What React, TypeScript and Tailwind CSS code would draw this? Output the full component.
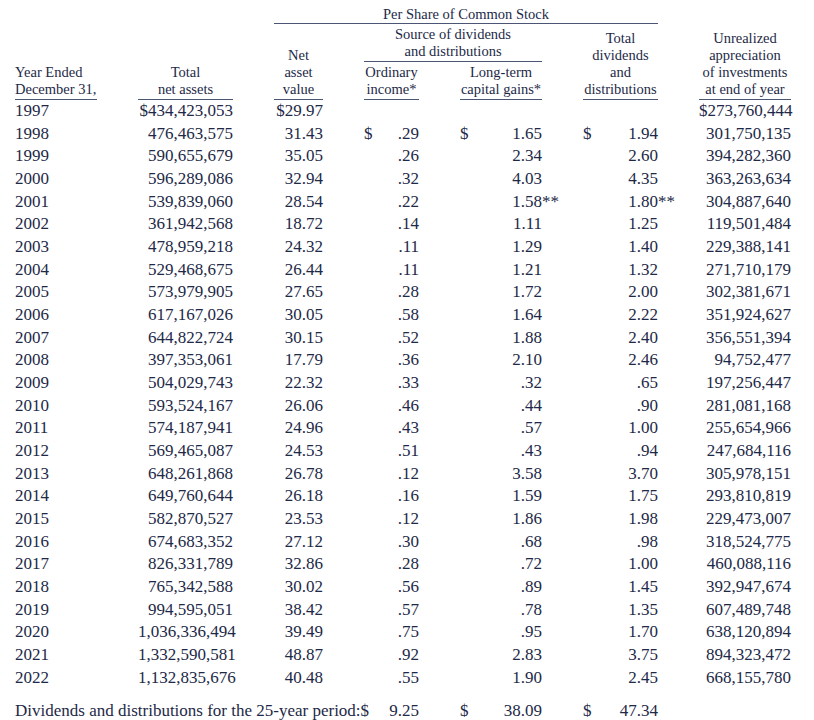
const rows: string[][] = [
  ["1997", "$434,423,053", "$29.97", "", "", "", "$273,760,444"],
  ["1998", "476,463,575", "31.43", ".29", "1.65", "1.94", "301,750,135"],
  ["1999", "590,655,679", "35.05", ".26", "2.34", "2.60", "394,282,360"],
  ["2000", "596,289,086", "32.94", ".32", "4.03", "4.35", "363,263,634"],
  ["2001", "539,839,060", "28.54", ".22", "1.58**", "1.80**", "304,887,640"],
  ["2002", "361,942,568", "18.72", ".14", "1.11", "1.25", "119,501,484"],
  ["2003", "478,959,218", "24.32", ".11", "1.29", "1.40", "229,388,141"],
  ["2004", "529,468,675", "26.44", ".11", "1.21", "1.32", "271,710,179"],
  ["2005", "573,979,905", "27.65", ".28", "1.72", "2.00", "302,381,671"],
  ["2006", "617,167,026", "30.05", ".58", "1.64", "2.22", "351,924,627"],
  ["2007", "644,822,724", "30.15", ".52", "1.88", "2.40", "356,551,394"],
  ["2008", "397,353,061", "17.79", ".36", "2.10", "2.46", "94,752,477"],
  ["2009", "504,029,743", "22.32", ".33", ".32", ".65", "197,256,447"],
  ["2010", "593,524,167", "26.06", ".46", ".44", ".90", "281,081,168"],
  ["2011", "574,187,941", "24.96", ".43", ".57", "1.00", "255,654,966"],
  ["2012", "569,465,087", "24.53", ".51", ".43", ".94", "247,684,116"],
  ["2013", "648,261,868", "26.78", ".12", "3.58", "3.70", "305,978,151"],
  ["2014", "649,760,644", "26.18", ".16", "1.59", "1.75", "293,810,819"],
  ["2015", "582,870,527", "23.53", ".12", "1.86", "1.98", "229,473,007"],
  ["2016", "674,683,352", "27.12", ".30", ".68", ".98", "318,524,775"],
  ["2017", "826,331,789", "32.86", ".28", ".72", "1.00", "460,088,116"],
  ["2018", "765,342,588", "30.02", ".56", ".89", "1.45", "392,947,674"],
  ["2019", "994,595,051", "38.42", ".57", ".78", "1.35", "607,489,748"],
  ["2020", "1,036,336,494", "39.49", ".75", ".95", "1.70", "638,120,894"],
  ["2021", "1,332,590,581", "48.87", ".92", "2.83", "3.75", "894,323,472"],
  ["2022", "1,132,835,676", "40.48", ".55", "1.90", "2.45", "668,155,780"],
];

// value with trailing footnote marks that hang past the column edge
const Amount = ({ v }: { v: string }) => {
  const marks = v.endsWith("**");
  return (
    <span>
      {marks ? v.slice(0, -2) : v}
      {marks && <span className="-mr-[17px]">**</span>}
    </span>
  );
};

const DivCell = ({ v, dollar }: { v: string; dollar: boolean }) => (
  <div className="flex justify-between">
    <span>{dollar ? "$" : ""}</span>
    <Amount v={v} />
  </div>
);

const cols = "grid grid-cols-[82px_95px_49px_55px_82px_75px_92px] gap-x-[41px] pl-[15px]";
const head = "border-b-[1.5px] border-[#4b5675] text-[14.5px] leading-[17px] whitespace-nowrap";

export default function App() {
  return (
    <div className="w-[814px] h-[720px] overflow-hidden bg-white pt-[2px] text-[#1d2947] font-['Liberation_Serif',serif]">
      {/* header */}
      <div className={cols}>
        <div className={`col-start-3 col-span-4 row-start-1 pt-[4px] text-center ${head}`}>
          Per Share of Common Stock
        </div>
        <div className={`col-start-1 row-start-2 row-span-2 self-end pb-[1px] ${head}`}>
          Year Ended
          <br />
          December 31,
        </div>
        <div className={`col-start-2 row-start-2 row-span-2 self-end pb-[1px] text-center ${head}`}>
          Total
          <br />
          net assets
        </div>
        <div className={`col-start-3 row-start-2 row-span-2 self-end pb-[1px] text-center ${head}`}>
          Net
          <br />
          asset
          <br />
          value
        </div>
        <div className={`col-start-4 col-span-2 row-start-2 pt-[1.5px] pb-[1.5px] text-center ${head}`}>
          Source of dividends
          <br />
          and distributions
        </div>
        <div className={`col-start-4 row-start-3 pt-[2px] pb-[1px] text-center ${head}`}>
          Ordinary
          <br />
          income*
        </div>
        <div className={`col-start-5 row-start-3 pt-[2px] pb-[1px] text-center ${head}`}>
          Long-term
          <br />
          capital gains*
        </div>
        <div className={`col-start-6 row-start-2 row-span-2 self-end pb-[1px] text-center ${head}`}>
          Total
          <br />
          dividends
          <br />
          and
          <br />
          distributions
        </div>
        <div className={`col-start-7 row-start-1 row-span-3 self-end pb-[1px] text-center ${head}`}>
          Unrealized
          <br />
          appreciation
          <br />
          of investments
          <br />
          at end of year
        </div>
      </div>

      {/* body */}
      <div className={`${cols} text-[17px] leading-[22.67px]`}>
        {rows.map((r, i) => (
          <div key={r[0]} className="contents">
            <div>{r[0]}</div>
            <div className="text-right">{r[1]}</div>
            <div className="text-right">{r[2]}</div>
            <DivCell v={r[3]} dollar={i === 1} />
            <DivCell v={r[4]} dollar={i === 1} />
            <DivCell v={r[5]} dollar={i === 1} />
            <div className="text-right">{r[6]}</div>
          </div>
        ))}

        {/* totals */}
        <div className="col-span-4 pt-[11px] flex justify-between whitespace-nowrap">
          <span>Dividends and distributions for the 25-year period:$</span>
          <span>9.25</span>
        </div>
        <div className="pt-[11px]">
          <DivCell v="38.09" dollar />
        </div>
        <div className="pt-[11px]">
          <DivCell v="47.34" dollar />
        </div>
      </div>
    </div>
  );
}
